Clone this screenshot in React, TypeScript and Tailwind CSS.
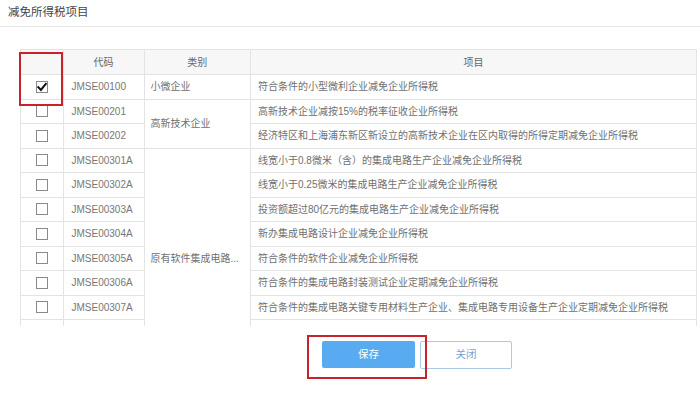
import React from "react";

type Row = { code: string; item: string; checked?: boolean };

const rows: Row[] = [
  { code: "JMSE00100", item: "符合条件的小型微利企业减免企业所得税", checked: true },
  { code: "JMSE00201", item: "高新技术企业减按15%的税率征收企业所得税" },
  { code: "JMSE00202", item: "经济特区和上海浦东新区新设立的高新技术企业在区内取得的所得定期减免企业所得税" },
  { code: "JMSE00301A", item: "线宽小于0.8微米（含）的集成电路生产企业减免企业所得税" },
  { code: "JMSE00302A", item: "线宽小于0.25微米的集成电路生产企业减免企业所得税" },
  { code: "JMSE00303A", item: "投资额超过80亿元的集成电路生产企业减免企业所得税" },
  { code: "JMSE00304A", item: "新办集成电路设计企业减免企业所得税" },
  { code: "JMSE00305A", item: "符合条件的软件企业减免企业所得税" },
  { code: "JMSE00306A", item: "符合条件的集成电路封装测试企业定期减免企业所得税" },
  { code: "JMSE00307A", item: "符合条件的集成电路关键专用材料生产企业、集成电路专用设备生产企业定期减免企业所得税" },
  { code: "", item: "" },
  { code: "", item: "" },
];

function Checkbox({ checked }: { checked?: boolean }) {
  return (
    <div className="w-[12px] h-[12px] border border-[#8a8a8a] bg-white flex items-center justify-center">
      {checked && (
        <svg width="10" height="10" viewBox="0 0 10 10">
          <path d="M1.3 5.2 L3.9 7.9 L8.8 1.8" fill="none" stroke="#111" strokeWidth="2" strokeLinecap="square" />
        </svg>
      )}
    </div>
  );
}

const cell = "border-r border-b border-[#e3e3e3] flex items-center";

export default function App() {
  const font = { fontFamily: '"Liberation Sans", "Noto Sans CJK SC", sans-serif' };
  return (
    <div className="relative w-[700px] h-[404px] bg-white overflow-hidden" style={font}>
      <div className="h-[27px] border-b border-[#e8e8e8] flex items-center pl-[8px] text-[11.5px] text-[#444]">
        减免所得税项目
      </div>

      <div className="ml-[20px] mt-[22px] w-[677px] h-[277px] overflow-hidden border-t border-l border-[#e3e3e3]">
        <div className="grid grid-cols-[42.5px_81px_106.5px_1fr] grid-rows-[25px_repeat(12,24.5px)] text-[10px] text-[#707070]">
          <div className={`${cell} bg-[#f7f7f7]`} />
          <div className={`${cell} bg-[#f7f7f7] justify-center text-[#666]`}>代码</div>
          <div className={`${cell} bg-[#f7f7f7] justify-center text-[#666]`}>类别</div>
          <div className={`${cell} bg-[#f7f7f7] justify-center text-[#666]`}>项目</div>

          {rows.map((r, i) => (
            <React.Fragment key={i}>
              <div className={`${cell} justify-center`} style={{ gridRow: i + 2, gridColumn: 1 }}>
                <Checkbox checked={r.checked} />
              </div>
              <div className={`${cell} pl-[8px] text-[10px] text-[#777]`} style={{ gridRow: i + 2, gridColumn: 2 }}>
                {r.code}
              </div>
              <div className={`${cell} pl-[7px]`} style={{ gridRow: i + 2, gridColumn: 4 }}>
                {r.item}
              </div>
            </React.Fragment>
          ))}

          <div className={`${cell} pl-[6px]`} style={{ gridRow: "2", gridColumn: 3 }}>小微企业</div>
          <div className={`${cell} pl-[6px]`} style={{ gridRow: "3 / span 2", gridColumn: 3 }}>高新技术企业</div>
          <div className={`${cell} pl-[6px]`} style={{ gridRow: "5 / span 9", gridColumn: 3 }}>原有软件集成电路...</div>
        </div>
      </div>

      <div className="flex gap-[5px] mt-[15px] pl-[322px]">
        <button className="w-[93px] h-[27px] bg-[#58abf1] text-white text-[10.5px] rounded-[2px]">保存</button>
        <button className="w-[92px] h-[28px] bg-white border border-[#a9cbe6] text-[#6fa6d6] text-[10.5px] rounded-[2px]">关闭</button>
      </div>

      <div className="absolute left-[19px] top-[52px] w-[44px] h-[54px] border-2 border-[#c8232b]" />
      <div className="absolute left-[307px] top-[335px] w-[120px] h-[44px] border-2 border-[#c8232b]" />
    </div>
  );
}
